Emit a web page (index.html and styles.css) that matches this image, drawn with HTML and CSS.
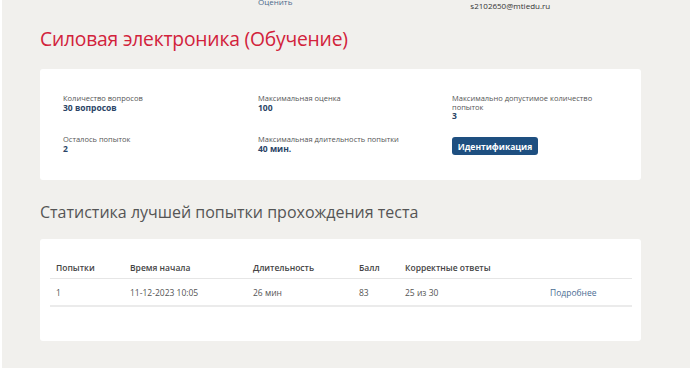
FILE: index.html
```html
<!DOCTYPE html>
<html lang="ru">
<head>
    <meta charset="UTF-8">
    <title>Силовая электроника (Обучение)</title>
    <link rel="stylesheet" href="styles.css">
</head>
<body>
    <div class="page">
        <div class="topbar">
            <span class="rate">Оценить</span>
            <span class="user">s2102650@mtiedu.ru</span>
        </div>

        <h1 class="title">Силовая электроника (Обучение)</h1>

        <div class="card info">
            <div class="item">
                <div class="label">Количество вопросов</div>
                <div class="value">30 вопросов</div>
            </div>
            <div class="item">
                <div class="label">Максимальная оценка</div>
                <div class="value">100</div>
            </div>
            <div class="item">
                <div class="label">Максимально допустимое количество попыток</div>
                <div class="value">3</div>
            </div>
            <div class="item">
                <div class="label">Осталось попыток</div>
                <div class="value">2</div>
            </div>
            <div class="item">
                <div class="label">Максимальная длительность попытки</div>
                <div class="value">40 мин.</div>
            </div>
            <div class="item">
                <button class="btn">Идентификация</button>
            </div>
        </div>

        <h2 class="subtitle">Статистика лучшей попытки прохождения теста</h2>

        <div class="card stats">
            <table>
                <thead>
                    <tr>
                        <th class="c1">Попытки</th>
                        <th class="c2">Время начала</th>
                        <th class="c3">Длительность</th>
                        <th class="c4">Балл</th>
                        <th class="c5">Корректные ответы</th>
                        <th></th>
                    </tr>
                </thead>
                <tbody>
                    <tr>
                        <td>1</td>
                        <td>11-12-2023 10:05</td>
                        <td>26 мин</td>
                        <td>83</td>
                        <td>25 из 30</td>
                        <td><a href="#">Подробнее</a></td>
                    </tr>
                </tbody>
            </table>
        </div>
    </div>
</body>
</html>
```

FILE: styles.css
```css
body {
    margin: 0;
    background: #ffffff;
    font-family: "Open Sans", "Noto Sans", sans-serif;
    color: #444;
}

.page {
    height: 368px;
    margin: 0 3px 0 2px;
    background: #f1f0ed;
    overflow: hidden;
}

.topbar {
    display: flex;
    height: 12px;
    font-size: 8px;
    line-height: 10px;
}

.rate {
    margin: -3px 0 0 256px;
    color: #4d6a8c;
}

.user {
    margin: 1px 0 0 178px;
    color: #333;
}

.title {
    margin: 13px 0 0 38px;
    font-size: 19.3px;
    font-weight: 500;
    line-height: 28px;
    color: #d2223b;
    letter-spacing: -0.2px;
}

.card {
    width: 601px;
    margin-left: 38px;
    background: #fff;
    border-radius: 3px;
}

.info {
    display: grid;
    grid-template-columns: 195px 194px 170px;
    grid-template-rows: 41px 43px;
    margin-top: 16px;
    padding: 25px 0 0 23px;
    box-sizing: border-box;
    height: 111px;
}

.label {
    font-size: 7.5px;
    line-height: 8.5px;
    color: #555;
    max-width: 150px;
}

.value {
    font-size: 8.5px;
    font-weight: 700;
    line-height: 10px;
    color: #2b4466;
}

.btn {
    display: block;
    margin-top: 2px;
    width: 86px;
    height: 18px;
    padding: 0;
    border: none;
    border-radius: 3px;
    background: #1e4f80;
    color: #fff;
    font-family: "Open Sans", sans-serif;
    font-size: 8.5px;
    font-weight: 700;
}

.subtitle {
    margin: 19px 0 0 38px;
    font-size: 16px;
    font-weight: 400;
    line-height: 26px;
    color: #555;
}

.stats {
    margin-top: 14px;
    height: 102px;
    padding: 17px 9px 0 10px;
    box-sizing: border-box;
}

table {
    width: 100%;
    border-collapse: collapse;
    font-size: 8.5px;
}

th {
    height: 22px;
    padding: 0 0 0 6px;
    text-align: left;
    font-weight: 600;
    color: #444;
    border-bottom: 1px solid #e6e6e6;
}

td {
    height: 26px;
    padding: 0 0 0 6px;
    color: #555;
    border-bottom: 2px solid #ebebeb;
}

.c1 { width: 68px; }
.c2 { width: 117px; }
.c3 { width: 100px; }
.c4 { width: 40px; }
.c5 { width: 139px; }

td a {
    color: #4a6d94;
    text-decoration: none;
}
```
